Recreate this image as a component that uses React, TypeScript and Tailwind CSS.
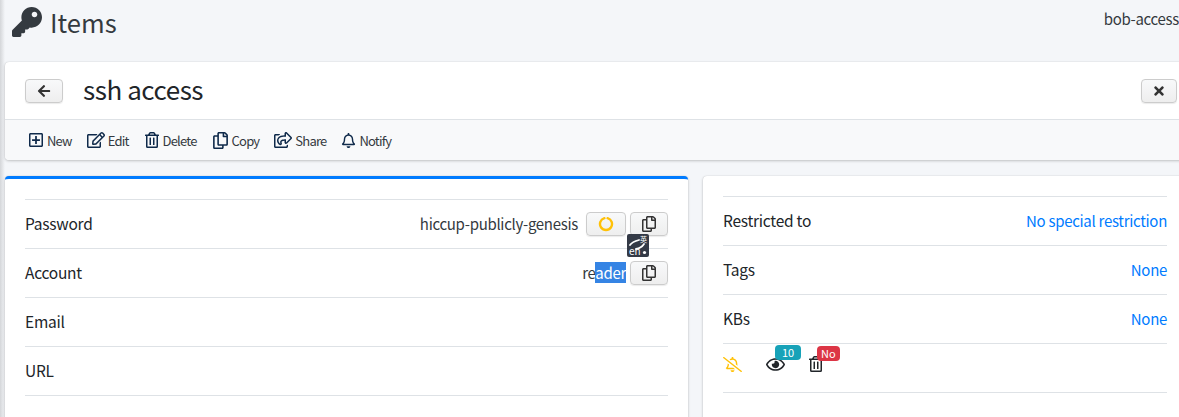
import { FaKey, FaArrowLeft, FaTimes, FaRegPlusSquare, FaRegEdit, FaRegTrashAlt, FaRegCopy, FaRegShareSquare, FaRegBell, FaRegEye, FaRegBellSlash } from 'react-icons/fa';
import type { ReactNode } from 'react';

const fontStack = '[font-family:"Noto_Sans_CJK_SC","Liberation_Sans",sans-serif]';

const tools = [
  { label: 'New', icon: <FaRegPlusSquare className="text-[16px]" /> },
  { label: 'Edit', icon: <FaRegEdit className="text-[18px]" /> },
  { label: 'Delete', icon: <FaRegTrashAlt className="text-[16px]" /> },
  { label: 'Copy', icon: <FaRegCopy className="text-[17px]" /> },
  { label: 'Share', icon: <FaRegShareSquare className="text-[18px]" /> },
  { label: 'Notify', icon: <FaRegBell className="text-[15px]" /> },
];

function SmallButton({ children, className }: { children: ReactNode; className: string }) {
  return (
    <button className={`flex h-[24px] items-center justify-center rounded-[4px] border border-[#ccc] bg-gradient-to-b from-[#f8f9fa] to-[#eeeeee] text-[#333] shadow-[0_1px_1px_rgba(0,0,0,0.08)] ${className}`}>
      {children}
    </button>
  );
}

function LeftRow({ label, children }: { label: string; children?: ReactNode }) {
  return (
    <div className="flex h-[49px] items-center justify-between border-t border-[#dee2e6] text-[#212529]">
      <span className="text-[15.5px] tracking-[-0.25px]">{label}</span>
      {children && <div className="flex items-center text-[15px] tracking-[-0.3px]">{children}</div>}
    </div>
  );
}

function RightRow({ label, value }: { label: string; value: string }) {
  return (
    <div className="flex h-[49px] items-center justify-between border-t border-[#dee2e6]">
      <span className="text-[15.5px] tracking-[-0.25px] text-[#212529]">{label}</span>
      <span className="text-[15px] tracking-[-0.3px] text-[#007bff]">{value}</span>
    </div>
  );
}

export default function App() {
  return (
    <div className={`relative h-[417px] w-[1179px] overflow-hidden bg-[#f4f6f9] text-[#212529] ${fontStack}`}>
      {/* sidebar shadow */}
      <div className="absolute inset-y-0 left-0 w-[5px] bg-gradient-to-r from-[#d4d6d9] to-[#f4f6f9]" />

      <div className="relative w-[1187px] pl-[5px]">
        {/* page header */}
        <div className="flex h-[62px] items-start justify-between">
          <div className="flex items-center pt-[7px] pl-[7px] text-[#343a40]">
            <FaKey className="text-[30px]" />
            <h1 className="ml-[8px] text-[25.6px] leading-[30px] font-normal">Items</h1>
          </div>
          <span className="pt-[8px] pr-[8px] text-[15px] leading-[22px] tracking-[-0.3px] text-[#343a40]">bob-access</span>
        </div>

        {/* item card */}
        <div className="h-[98px] rounded-[4px] bg-white shadow-[0_0_1px_rgba(0,0,0,0.2),0_1px_3px_rgba(0,0,0,0.2)]">
          <div className="flex h-[58px] items-center justify-between border-b border-[#dee2e6] pr-[10px] pl-[20px]">
            <div className="flex items-center">
              <SmallButton className="w-[38px]">
                <FaArrowLeft className="text-[14px]" />
              </SmallButton>
              <h2 className="mb-[4px] ml-[20px] text-[26px] leading-[34px] tracking-[-0.45px] font-normal">ssh access</h2>
            </div>
            <SmallButton className="w-[36px]">
              <FaTimes className="text-[14px]" />
            </SmallButton>
          </div>
          <div className="flex h-[40px] items-center gap-[15px] rounded-b-[4px] bg-[#f8f9fa] pl-[23px] text-[13px] tracking-[-0.8px] text-[#343a40]">
            {tools.map((tool) => (
              <span key={tool.label} className="flex items-center gap-[3px]">
                <span className="text-[#0f2a4a]">{tool.icon}</span>
                <span className="mt-[2px]">{tool.label}</span>
              </span>
            ))}
          </div>
        </div>

        {/* detail columns */}
        <div className="mt-[16px] flex gap-[15px]">
          <div className="h-[300px] w-[683px] rounded-[4px] border-t-[3px] border-[#007bff] bg-white px-[20px] pt-[20px] shadow-[0_0_1px_rgba(0,0,0,0.2),0_1px_3px_rgba(0,0,0,0.2)]">
            <LeftRow label="Password">
              <span className="mr-[8px] text-[#343a40]">hiccup-publicly-genesis</span>
              <SmallButton className="mr-[4px] w-[40px]">
                <svg width="16" height="16" viewBox="0 0 16 16" fill="none">
                  <path d="M9.6 2.2a6 6 0 1 1-3.2 0" stroke="#ffc107" strokeWidth="2.4" strokeLinecap="round" />
                </svg>
              </SmallButton>
              <SmallButton className="w-[38px]">
                <FaRegCopy className="text-[16px]" />
              </SmallButton>
            </LeftRow>
            <LeftRow label="Account">
              <span className="mr-[4px] text-[#343a40]">
                re<span className="bg-[#3584e4] text-white">ader</span>
              </span>
              <SmallButton className="w-[38px]">
                <FaRegCopy className="text-[16px]" />
              </SmallButton>
            </LeftRow>
            <LeftRow label="Email" />
            <LeftRow label="URL" />
            <div className="border-t border-[#dee2e6]" />
          </div>

          <div className="h-[300px] w-[484px] rounded-[4px] bg-white px-[20px] pt-[20px] shadow-[0_0_1px_rgba(0,0,0,0.2),0_1px_3px_rgba(0,0,0,0.2)]">
            <RightRow label="Restricted to" value="No special restriction" />
            <RightRow label="Tags" value="None" />
            <RightRow label="KBs" value="None" />
            <div className="flex h-[49px] items-center border-t border-[#dee2e6] pb-[8px]">
              <FaRegBellSlash className="text-[19px] text-[#ffc107]" />
              <span className="relative ml-[24px]">
                <FaRegEye className="text-[19px]" />
                <span className="absolute -top-[10px] left-[9px] rounded-[4px] bg-[#17a2b8] px-[7px] text-[11px] leading-[15px] text-white">10</span>
              </span>
              <span className="relative ml-[23px]">
                <FaRegTrashAlt className="text-[16px]" />
                <span className="absolute -top-[10px] left-[9px] rounded-[4px] bg-[#dc3545] px-[4px] text-[11px] leading-[15px] text-white">No</span>
              </span>
            </div>
            <div className="border-t border-[#dee2e6]" />
          </div>
        </div>
      </div>

      {/* translator extension popup */}
      <div className="absolute top-[234px] left-[627px] flex h-[23px] w-[22px] items-center justify-center rounded-[2px] bg-[#343a46]">
        <svg width="22" height="23" viewBox="0 0 22 23" fill="none">
          <path d="M3 11C5 8 8 7 12 6" stroke="#fff" strokeWidth="1.8" strokeLinecap="round" />
          <path d="M9 15C12 14.5 15 13 17 10" stroke="#fff" strokeWidth="1.8" strokeLinecap="round" />
          <text x="13" y="8" fontSize="7" fill="#fff">英</text>
          <text x="2" y="21" fontSize="10" fill="#fff">en</text>
          <circle cx="17.5" cy="18.5" r="1.6" fill="#fff" />
        </svg>
      </div>
    </div>
  );
}
